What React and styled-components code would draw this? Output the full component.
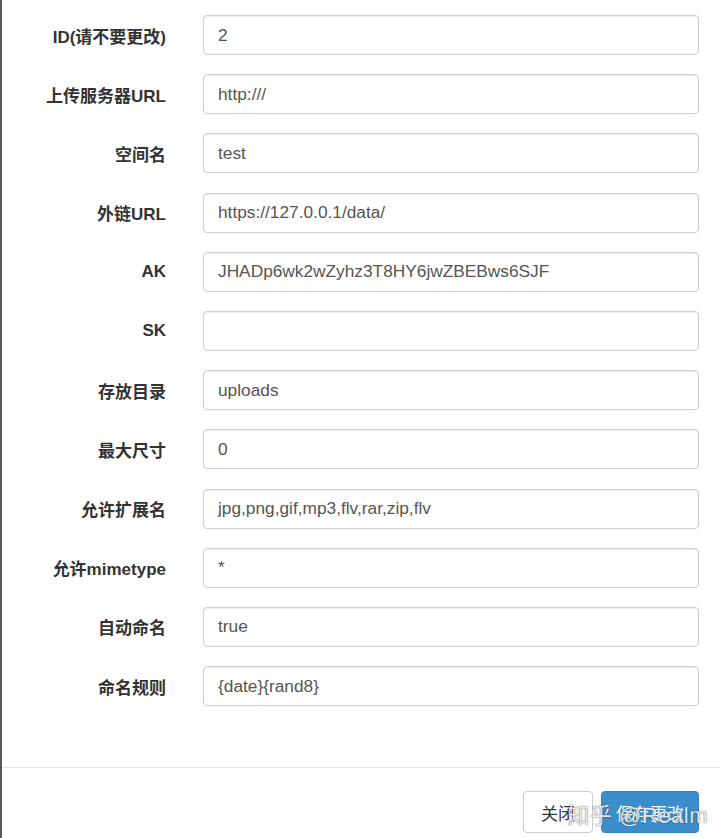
import React from 'react';
import styled, { createGlobalStyle } from 'styled-components';

const GlobalStyle = createGlobalStyle`
  html, body {
    margin: 0;
    padding: 0;
    background: #fff;
  }
  body {
    font-family: "Liberation Sans", "Noto Sans CJK SC", sans-serif;
  }
`;

const fields = [
  { label: 'ID(请不要更改)', value: '2' },
  { label: '上传服务器URL', value: 'http:///' },
  { label: '空间名', value: 'test' },
  { label: '外链URL', value: 'https://127.0.0.1/data/' },
  { label: 'AK', value: 'JHADp6wk2wZyhz3T8HY6jwZBEBws6SJF' },
  { label: 'SK', value: '' },
  { label: '存放目录', value: 'uploads' },
  { label: '最大尺寸', value: '0' },
  { label: '允许扩展名', value: 'jpg,png,gif,mp3,flv,rar,zip,flv' },
  { label: '允许mimetype', value: '*' },
  { label: '自动命名', value: 'true' },
  { label: '命名规则', value: '{date}{rand8}' },
];

const App = () => {
  return (
    <>
      <GlobalStyle />
      <Modal>
        <Body>
          {fields.map((f) => (
            <Row key={f.label}>
              <Label>{f.label}</Label>
              <Input type="text" defaultValue={f.value} />
            </Row>
          ))}
        </Body>
        <Footer>
          <Button>关闭</Button>
          <Button primary>保存更改</Button>
          <Watermark>知乎 @Realm</Watermark>
        </Footer>
      </Modal>
    </>
  );
};

const Modal = styled.div`
  border-left: 2px solid #5a5a5a;
  height: 838px;
  box-sizing: border-box;
  overflow: hidden;
`;

const Body = styled.form`
  padding: 15px 21px 61px 0;
  display: flex;
  flex-direction: column;
  gap: 19.2px;
`;

const Row = styled.div`
  display: grid;
  grid-template-columns: 164px 1fr;
  column-gap: 37px;
  align-items: center;
`;

const Label = styled.label`
  text-align: right;
  font-weight: bold;
  font-size: 17px;
  color: #333;
`;

const Input = styled.input`
  height: 40px;
  box-sizing: border-box;
  border: 1px solid #ccc;
  border-radius: 4px;
  padding: 6px 14px;
  font-family: "Liberation Sans", "Noto Sans CJK SC", sans-serif;
  font-size: 17.3px;
  color: #555;
  background: #fff;
  box-shadow: inset 0 1px 1px rgba(0, 0, 0, 0.075);
  outline: none;
`;

const Footer = styled.div`
  position: relative;
  border-top: 1px solid #e5e5e5;
  padding: 23px 21px 0 0;
  display: flex;
  justify-content: flex-end;
  gap: 8px;
`;

const Button = styled.button`
  height: 42px;
  padding: 0 14px;
  border-radius: 4px;
  font-family: "Liberation Sans", "Noto Sans CJK SC", sans-serif;
  font-size: 17px;
  border: 1px solid ${(p) => (p.primary ? '#367fbf' : '#ccc')};
  background: ${(p) => (p.primary ? '#3c8dcb' : '#fff')};
  color: ${(p) => (p.primary ? '#fff' : '#333')};
  min-width: ${(p) => (p.primary ? '98px' : '70px')};
`;

const Watermark = styled.span`
  position: absolute;
  right: 12px;
  top: 29px;
  font-size: 22px;
  color: rgba(255, 255, 255, 0.9);
  text-shadow: 0 0 1px rgba(0, 0, 0, 0.6), 0 0 2px rgba(0, 0, 0, 0.3);
  pointer-events: none;
  letter-spacing: 0.5px;
`;

export default App;
